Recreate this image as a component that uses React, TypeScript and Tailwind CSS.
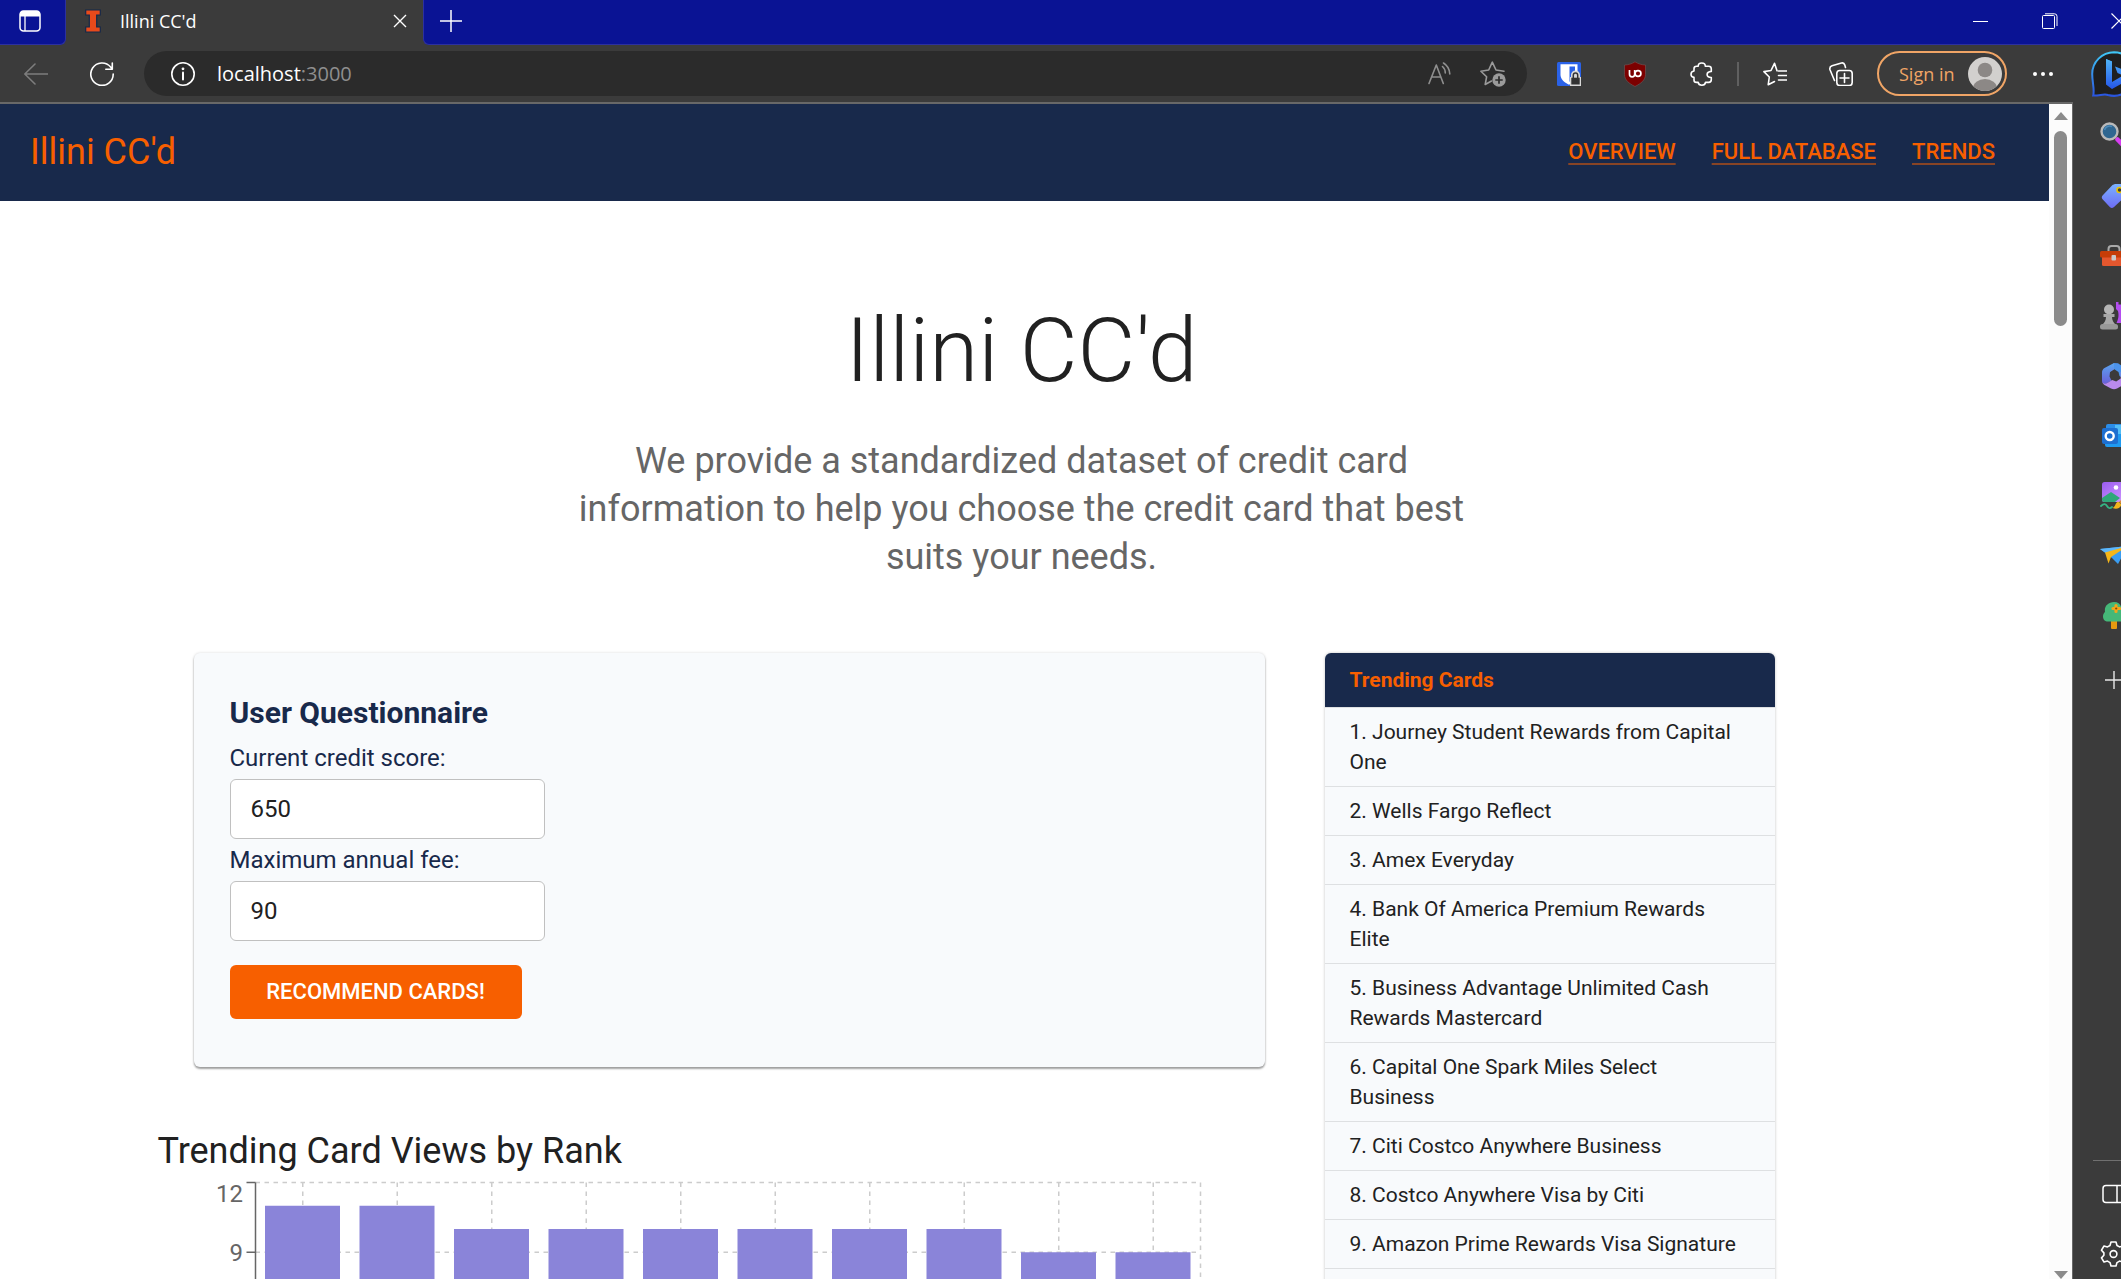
import React from "react";

const views = [11, 11, 10, 10, 10, 10, 10, 10, 9, 9];

const trending = [
  "Journey Student Rewards from Capital One",
  "Wells Fargo Reflect",
  "Amex Everyday",
  "Bank Of America Premium Rewards Elite",
  "Business Advantage Unlimited Cash Rewards Mastercard",
  "Capital One Spark Miles Select Business",
  "Citi Costco Anywhere Business",
  "Costco Anywhere Visa by Citi",
  "Amazon Prime Rewards Visa Signature",
];

type LineIconProps = { children: React.ReactNode; className?: string };

function LineIcon({ children, className = "size-6 shrink-0" }: LineIconProps) {
  return (
    <svg
      viewBox="0 0 24 24"
      fill="none"
      stroke="currentColor"
      strokeWidth="1.6"
      strokeLinecap="round"
      strokeLinejoin="round"
      className={className}
      aria-hidden="true"
    >
      {children}
    </svg>
  );
}

function TabStrip() {
  return (
    <div className="flex h-[45px] shrink-0 bg-[#3b3b3b] text-white">
      <div className="flex w-[66px] shrink-0 items-center rounded-br-md border-r border-b border-[#2c30a0] bg-[#0a1394] pb-0.5 pl-[19px]">
        <button type="button" aria-label="Tab actions">
          <svg viewBox="0 0 22 22" className="size-[22px]" fill="none" aria-hidden="true">
            <rect x="1" y="1" width="20" height="20" rx="3.5" stroke="#fff" strokeWidth="1.5" />
            <path d="M1 6.5V4.5A3.5 3.5 0 0 1 4.5 1h13A3.5 3.5 0 0 1 21 4.5v2z" fill="#fff" />
            <path d="M6 6v15" stroke="#fff" strokeWidth="1.3" />
          </svg>
        </button>
      </div>
      <div className="flex w-[357px] shrink-0 items-center pr-4 pb-[3px] pl-[19px]">
        <svg viewBox="0 0 16 24" className="h-6 w-4" aria-hidden="true">
          <path
            d="M.7 1h14.6v5h-3.6v12h3.6v5H.7v-5h3.6V6H.7z"
            fill="#e84a1b"
            stroke="#13294b"
            strokeWidth="1.2"
          />
        </svg>
        <span className="ml-[19px] flex-1 text-lg leading-6">Illini CC'd</span>
        <button type="button" aria-label="Close tab">
          <svg viewBox="0 0 14 14" className="size-[14px]" stroke="#fff" strokeWidth="1.4" aria-hidden="true">
            <path d="M1 1l12 12M13 1L1 13" />
          </svg>
        </button>
      </div>
      <div className="flex min-w-0 flex-1 items-center overflow-hidden rounded-bl-md border-b border-l border-[#2c30a0] bg-[#0a1394] pb-[3px] pl-4">
        <button type="button" aria-label="New tab">
          <svg viewBox="0 0 22 22" className="size-[22px]" stroke="#fff" strokeWidth="1.5" aria-hidden="true">
            <path d="M0 11h22M11 0v22" />
          </svg>
        </button>
        <div className="-mr-1.5 ml-auto flex items-center gap-[53px]">
          <button type="button" aria-label="Minimize">
            <svg viewBox="0 0 16 16" className="size-4" stroke="#fff" strokeWidth="1" aria-hidden="true">
              <path d="M0 8.5h15" />
            </svg>
          </button>
          <button type="button" aria-label="Restore">
            <svg viewBox="0 0 16 16" className="size-4" stroke="#fff" fill="none" strokeWidth="1" aria-hidden="true">
              <rect x=".5" y="2.5" width="12" height="13" rx="1" />
              <path d="M3 .8h9.500a2.500 2.500 0 0 1 2.500 2.500V13" />
            </svg>
          </button>
          <button type="button" aria-label="Close">
            <svg viewBox="0 0 16 16" className="size-4" stroke="#fff" strokeWidth="1.2" aria-hidden="true">
              <path d="M.5 .5l15 15M15.500 .5l-15 15" />
            </svg>
          </button>
        </div>
      </div>
    </div>
  );
}

function Toolbar() {
  return (
    <div className="flex h-[57px] shrink-0 items-center overflow-hidden bg-[#3b3b3b] pl-6 text-white">
      <button type="button" aria-label="Back" className="text-[#7d7d7d]">
        <LineIcon>
          <path d="M23.5 12H.8M11 2L.8 12 11 22" />
        </LineIcon>
      </button>
      <button type="button" aria-label="Refresh" className="ml-[42px]">
        <LineIcon>
          <path d="M23.2 12A11.2 11.2 0 1 1 20.6 5l1.6 2M22.3 1v6.2h-6.5" />
        </LineIcon>
      </button>
      <div className="ml-[30px] flex h-[45px] min-w-0 flex-1 items-center rounded-full bg-[#2b2b2b] pr-[21px] pl-[27px]">
        <LineIcon>
          <circle cx="12" cy="12" r="11.2" />
          <path d="M12 10.5v7" strokeWidth="2" />
          <circle cx="12" cy="6.8" r=".6" fill="currentColor" />
        </LineIcon>
        <span className="ml-[22px] flex-1 text-xl leading-6">
          localhost<span className="text-[#8f8f8f]">:3000</span>
        </span>
        <button type="button" aria-label="Read aloud" className="text-[#8f8f8f]">
          <LineIcon>
            <path d="M1 21.5L8.3 3l7 18.5M3.6 15h9.3M14.5 4.5c1.8 1.6 2.8 3.9 2.8 6.5M15.5 1c3.6 2.3 6.1 6.3 6.3 11" />
          </LineIcon>
        </button>
        <button type="button" aria-label="Add to favorites" className="ml-7 text-[#9a9a9a]">
          <svg viewBox="0 0 26 26" className="size-[26px]" fill="none" aria-hidden="true">
            <path
              d="M24 10.2l-8-1.2L12.3 1.2 8.7 9 .9 10.2 6.6 15.8 5.2 23.5 11.5 20"
              stroke="currentColor"
              strokeWidth="1.6"
              strokeLinejoin="round"
              strokeLinecap="round"
            />
            <circle cx="19" cy="19" r="6.7" fill="currentColor" />
            <path d="M19 15.3v7.4M15.3 19h7.4" stroke="#2b2b2b" strokeWidth="1.7" />
          </svg>
        </button>
      </div>
      <button type="button" aria-label="Password manager" className="ml-[30px]">
        <svg viewBox="0 0 24 24" className="size-6" aria-hidden="true">
          <rect width="24" height="24" rx="1.5" fill="#2a62e8" />
          <path d="M3.5 2.3h17v10.5c0 4.500-3.500 7.600-8.500 10-5-2.400-8.500-5.500-8.500-10z" fill="#fff" />
          <path d="M12.5 4.5H18v8.300c0 3-2 5-5.500 7z" fill="#2a62e8" />
          <path d="M14 15v-2a4.500 4.500 0 0 1 9 0v2h1v9H13v-9z" fill="#d8d8d8" />
          <path d="M16.300 16v-2.800a2.200 2.200 0 0 1 4.400 0V16" fill="none" stroke="#333" strokeWidth="1.5" />
          <rect x="14.300" y="15.700" width="8.400" height="6.800" fill="#333" />
        </svg>
      </button>
      <button type="button" aria-label="Ad blocker" className="ml-[42px]">
        <svg viewBox="0 0 24 26" className="h-[26px] w-6" fill="none" aria-hidden="true">
          <path
            d="M12 .8c3.300 2.100 6.600 3 10.500 3.200v9.500c0 5.500-4.500 9-10.500 12-6-3-10.500-6.500-10.500-12V4C5.400 3.800 8.700 2.900 12 .8z"
            fill="#7c0000"
            stroke="#6b5252"
            strokeWidth=".7"
          />
          <path d="M6.500 9v4.200a2.600 2.600 0 0 0 5.200 0V9" stroke="#fff" strokeWidth="1.7" />
          <circle cx="15" cy="12.500" r="2.900" stroke="#fff" strokeWidth="1.7" />
        </svg>
      </button>
      <button type="button" aria-label="Extensions" className="ml-[43px]">
        <LineIcon>
          <path d="M8.200 4.200C8.200 2.300 9.800 1 11.800 1s3.500 1.300 3.500 3.200h3.400c1.600 0 2.600 1 2.600 2.600v2.600c-3.200.3-4.200 1.400-4.200 3.100 0 1.700 1 2.800 4.200 3v2.300c0 1.600-1 2.600-2.600 2.600h-3.200c-.2 1.700-1.700 2.800-3.600 2.800s-3.500-1.100-3.700-2.800H6.400c-1.500 0-2.400-1-2.400-2.500v-2.500C2.200 15.200 1 14 1 12.200s1.200-3 3-3.200V6.700c0-1.600 1-2.500 2.500-2.500z" />
        </LineIcon>
      </button>
      <div className="ml-[23px] h-6 w-0.5 shrink-0 bg-[#606060]" />
      <button type="button" aria-label="Favorites" className="ml-6">
        <LineIcon>
          <path d="M14 8.800L11.500 1.300 8 8.500.9 9.600 6.300 15 5.200 22.800 11.500 19.500M15.500 9h8M15.500 13.500h8M15.500 18h8" />
        </LineIcon>
      </button>
      <button type="button" aria-label="Collections" className="ml-[42px]">
        <LineIcon>
          <rect x="7.800" y="8.500" width="15.400" height="15" rx="3" />
          <path d="M15.500 11.500v9M11 16h9M5.500 18.500L1 7.700C.5 5.800 1.300 4.400 3 3.800L12.500 1c1.600-.4 2.800.3 3.300 2l.7 2.500" />
        </LineIcon>
      </button>
      <button
        type="button"
        className="ml-6 flex h-[45px] w-[130px] shrink-0 items-center justify-between rounded-full border-2 border-[#f0a566] pr-[3px] pl-5 text-lg leading-6 text-[#f0a566]"
      >
        Sign in
        <svg viewBox="0 0 34 34" className="size-[34px]" aria-hidden="true">
          <clipPath id="avatar">
            <circle cx="17" cy="17" r="17" />
          </clipPath>
          <g clipPath="url(#avatar)">
            <rect width="34" height="34" fill="#d2d0ce" />
            <circle cx="17" cy="13" r="7.3" fill="#8c8886" />
            <ellipse cx="17" cy="31.500" rx="12" ry="9.500" fill="#8c8886" />
          </g>
        </svg>
      </button>
      <button type="button" aria-label="Settings and more" className="ml-6">
        <svg viewBox="0 0 24 24" className="size-6" fill="#fff" aria-hidden="true">
          <circle cx="4" cy="12" r="2" />
          <circle cx="12" cy="12" r="2" />
          <circle cx="20" cy="12" r="2" />
        </svg>
      </button>
      <button type="button" aria-label="Bing chat" className="ml-9 w-[30px] shrink-0 overflow-hidden">
        <svg viewBox="0 0 46 46" className="size-[46px]" aria-hidden="true">
          <defs>
            <linearGradient id="bingRing" x1="0" y1="0" x2="0" y2="1">
              <stop offset="0" stopColor="#3fc6f5" />
              <stop offset="1" stopColor="#2a55e0" />
            </linearGradient>
            <linearGradient id="bingB" x1="0" y1="0" x2="0" y2="1">
              <stop offset="0" stopColor="#4fb4f5" />
              <stop offset="1" stopColor="#2556ea" />
            </linearGradient>
          </defs>
          <path
            d="M23 1.200A21.800 21.800 0 1 1 17 44c-4-1.500-8 .8-14.800.6C3.800 38 1.200 32 1.200 23A21.800 21.800 0 0 1 23 1.200z"
            fill="#1f1f1f"
            stroke="url(#bingRing)"
            strokeWidth="2"
          />
          <path d="M15 8l6 2.500v18.500L15 33z" fill="#3f9ff5" />
          <path d="M15 8l6 2.500v20.500l11-6.500-5.500-2.500-2.500-6.500 13 5v8.500L21 38l-6-4.500z" fill="url(#bingB)" />
        </svg>
      </button>
    </div>
  );
}

function SideCell({ label, children }: { label: string; children: React.ReactNode }) {
  return (
    <button type="button" aria-label={label} className="flex h-[60px] w-full shrink-0 items-center overflow-hidden pl-[27px]">
      {children}
    </button>
  );
}

const colorIcon = "size-7 shrink-0";

function Sidebar() {
  return (
    <aside className="flex w-12 shrink-0 flex-col overflow-hidden bg-[#3b3b3b] pt-1 text-white">
      <svg className="absolute size-0" aria-hidden="true">
        <defs>
          <linearGradient id="tagFill" x1="0" y1="0" x2="0" y2="1">
            <stop offset="0" stopColor="#7ab2ff" />
            <stop offset="1" stopColor="#6d6cf5" />
          </linearGradient>
          <linearGradient id="officeBlue" x1="0" y1="0" x2="0" y2="1">
            <stop offset="0" stopColor="#5aa6f0" />
            <stop offset="1" stopColor="#6a5fd9" />
          </linearGradient>
          <linearGradient id="photoFill" x1="0" y1="0" x2="1" y2="1">
            <stop offset="0" stopColor="#9a5cf0" />
            <stop offset="1" stopColor="#d39bff" />
          </linearGradient>
        </defs>
      </svg>
      <SideCell label="Search">
        <svg viewBox="0 0 28 28" className={colorIcon} aria-hidden="true">
          <path d="M17.500 17.500l7 7" stroke="#d63df0" strokeWidth="4.500" strokeLinecap="round" />
          <circle cx="9.500" cy="9.500" r="8" fill="#2f6690" stroke="#b9b9b9" strokeWidth="2.400" />
          <path d="M4.500 8A5.500 5.500 0 0 1 12 4.500" stroke="#4d8ab8" strokeWidth="1.500" fill="none" />
        </svg>
      </SideCell>
      <SideCell label="Shopping">
        <svg viewBox="0 0 28 28" className={colorIcon} aria-hidden="true">
          <path d="M15 2h10a2 2 0 0 1 2 2v9L14 25a3 3 0 0 1-4.200 0L2.800 17.500a3 3 0 0 1 0-4.200L12.500 3z" fill="url(#tagFill)" />
          <circle cx="19.500" cy="8" r="2.500" fill="#3b3b3b" stroke="#e8c400" strokeWidth="1.600" />
        </svg>
      </SideCell>
      <SideCell label="Tools">
        <svg viewBox="0 0 28 28" className={colorIcon} aria-hidden="true">
          <path d="M8.500 9V7a3 3 0 0 1 3-3h5a3 3 0 0 1 3 3v2" fill="none" stroke="#aaa" strokeWidth="2" />
          <path d="M2 14h24v8.500a1.500 1.500 0 0 1-1.500 1.500h-21A1.500 1.500 0 0 1 2 22.500z" fill="#e4572e" />
          <rect x="0" y="9" width="28" height="6.500" rx="1.500" fill="#c63d08" />
          <rect x="11.500" y="13" width="4.500" height="5.500" rx="1" fill="#c9c9c9" />
        </svg>
      </SideCell>
      <SideCell label="Games">
        <svg viewBox="0 0 28 28" className={colorIcon} aria-hidden="true">
          <path d="M16 0h2.500v2.500H21V0h3v2.500h2V0h2v9h-2v12H16.500c2-4 2.500-8 1.500-12l-2-2z" fill="#b44df0" />
          <circle cx="9" cy="7.500" r="5" fill="#b5b5b5" />
          <path d="M3.500 12h11v3h-2.500c0 3.500 1.500 5.500 3.500 7.500H2.500C4.500 20.500 6 18.500 6 15H3.500z" fill="#a8a8a8" />
          <rect x="0" y="22" width="18" height="5.500" rx="2.500" fill="#999" />
        </svg>
      </SideCell>
      <SideCell label="Microsoft 365">
        <svg viewBox="0 0 28 28" className={colorIcon} aria-hidden="true">
          <path d="M14 1l4 .3 8 5.200c1 1 1.500 2 1.500 3.500v9l-8-5-1-4-4.500-3-4.500 3z" fill="#4c93ea" />
          <path d="M14 1L4.500 6C3 7 2 8.500 2 10.500v8.500c0 2.500 2.500 3.500 4.500 2.500l5-3-2-4 .5-4.500 4-2.500z" fill="url(#officeBlue)" />
          <path d="M2.200 19.500c.8 2.500 3 2.800 5 1.500l5-3 4 1.500 4.500-3V10l5 3.500c1.300 1 1.800 2 1.800 3.500 0 2-.5 3.500-2 4.500L17 26.500c-2 1-4 1-6 0L4.500 23c-1.300-.8-2-2-2.300-3.500z" fill="#b98aec" />
        </svg>
      </SideCell>
      <SideCell label="Outlook">
        <svg viewBox="0 0 28 28" className={colorIcon} aria-hidden="true">
          <rect x="6" y="2" width="22" height="14" rx="2" fill="#2b8de8" />
          <rect x="15" y="3" width="13" height="10" fill="#53bdf5" />
          <path d="M5 12h23v13H7a2 2 0 0 1-2-2z" fill="#1f9af0" />
          <rect x="2" y="6" width="16" height="16" rx="2" fill="#1e6fd0" />
          <circle cx="9.700" cy="14" r="4" fill="none" stroke="#fff" strokeWidth="2.400" />
        </svg>
      </SideCell>
      <SideCell label="Image creator">
        <svg viewBox="0 0 28 28" className={colorIcon} aria-hidden="true">
          <rect x="2" y="0" width="26" height="20" rx="2.500" fill="url(#photoFill)" />
          <path d="M2 16l9-6 9 6-5 4H4.500A2.500 2.500 0 0 1 2 17.500z" fill="#2fa878" />
          <circle cx="16" cy="5.500" r="2.300" fill="#fff" />
          <path d="M1 24c3-3 5-2 6 0s3 3 5 1" stroke="#35b383" strokeWidth="1.800" fill="none" strokeLinecap="round" />
          <path d="M28 11l-9 9 2 2 7-6z" fill="#d98b3a" />
          <path d="M18 19.500l3.500 3c-1 4-5 5-9 3.500 3-1 2.500-5 5.500-6.500z" fill="#f2b41c" />
        </svg>
      </SideCell>
      <SideCell label="Drop">
        <svg viewBox="0 0 28 28" className={colorIcon} aria-hidden="true">
          <path d="M0 7l28-3-10 18-6-6z" fill="#3a9df2" />
          <path d="M0 7l28-3L9 13z" fill="#5db7fa" />
          <path d="M5 10.500L28 4 11 15l-2.500 6.500z" fill="#f5b619" />
        </svg>
      </SideCell>
      <SideCell label="Tree">
        <svg viewBox="0 0 28 28" className={colorIcon} aria-hidden="true">
          <rect x="11" y="18" width="6" height="9" rx="1" fill="#e69a10" />
          <path d="M14 0c5 0 7 3 7.500 6.500 3 2 4.500 5 4 8-.5 3-2.500 5-5.500 5H8c-3 0-5-2-5-5 0-2 .8-3.500 2-4.500C4 4.500 8 0 14 0z" fill="#45b878" />
          <path d="M16 3.500v6M13 6.500h6.500" stroke="#f2a61a" strokeWidth="3.200" strokeLinecap="round" />
          <circle cx="16.200" cy="6.500" r="1.100" fill="#8a4a00" />
        </svg>
      </SideCell>
      <div className="pt-1">
        <SideCell label="Customize">
          <svg viewBox="0 0 28 28" className={colorIcon} stroke="#e8e8e8" strokeWidth="1.400" aria-hidden="true">
            <path d="M5 14h18M14 5v18" />
          </svg>
        </SideCell>
      </div>
      <div className="mt-auto mb-[-5px] ml-5 h-px shrink-0 bg-[#707070]" />
      <div className="mt-2 mb-[-5px] flex flex-col">
        <SideCell label="Hide sidebar">
          <svg viewBox="0 0 28 28" className={colorIcon} fill="none" stroke="#fff" strokeWidth="1.500" aria-hidden="true">
            <rect x="3" y="5.500" width="24" height="17" rx="3" />
            <path d="M17 5.500v17" />
          </svg>
        </SideCell>
        <SideCell label="Settings">
          <svg viewBox="0 0 28 28" className={colorIcon} fill="none" stroke="#fff" strokeWidth="1.600" strokeLinejoin="round" aria-hidden="true">
            <circle cx="13.500" cy="14" r="3.400" />
            <path d="M11 2h5l1 3.500 2.500 1.400 3.500-.9 2.500 4.200-2.400 2.700v2.400l2.400 2.600L23 22l-3.500-.9-2.500 1.500L16 26h-5l-1-3.400-2.500-1.500L4 22l-2.500-4.100 2.400-2.600v-2.400L1.500 10.200 4 6l3.500.9L10 5.500z" />
          </svg>
        </SideCell>
      </div>
    </aside>
  );
}

function Scrollbar() {
  return (
    <div className="flex w-[23px] shrink-0 flex-col items-center bg-[#fcfcfc] pt-2" aria-hidden="true">
      <svg viewBox="0 0 14 8" className="h-2 w-[14px] shrink-0" fill="#8b8b8b">
        <path d="M7 0l7 8H0z" />
      </svg>
      <div className="mt-[11px] h-[195px] w-[13px] shrink-0 rounded-full bg-[#8b8b8b]" />
      <svg viewBox="0 0 14 8" className="mt-auto h-2 w-[14px] shrink-0" fill="#8b8b8b">
        <path d="M0 0h14L7 8z" />
      </svg>
    </div>
  );
}

function NavBar() {
  return (
    <nav className="flex h-[97px] items-center justify-between bg-[#18294b] pr-[54px] pb-0.5 pl-[30px] text-[#f75f00]">
      <span className="text-4xl">Illini CC'd</span>
      <div className="flex gap-9 text-[22px] leading-9 font-medium uppercase">
        <a href="#overview" className="underline decoration-[#f75f00]/50 decoration-2 underline-offset-4">Overview</a>
        <a href="#database" className="underline decoration-[#f75f00]/50 decoration-2 underline-offset-4">Full Database</a>
        <a href="#trends" className="underline decoration-[#f75f00]/50 decoration-2 underline-offset-4">Trends</a>
      </div>
    </nav>
  );
}

function Questionnaire() {
  const field =
    "h-[60px] w-[315px] rounded-md border border-[#c0c0c0] bg-white px-5 text-2xl text-[#212121] outline-none";
  return (
    <form className="mx-9 flex flex-col items-start gap-[3px] rounded-md bg-[#f8fafc] px-9 pt-9 pb-12 shadow-[0_2px_2px_rgba(0,0,0,0.35),0_0_3px_rgba(0,0,0,0.15)]">
      <h2 className="text-3xl leading-[48px] font-bold text-[#18294b]">User Questionnaire</h2>
      <label htmlFor="score" className="text-2xl leading-9 text-[#18294b]">Current credit score:</label>
      <input id="score" type="text" defaultValue="650" className={field} />
      <label htmlFor="fee" className="text-2xl leading-9 text-[#18294b]">Maximum annual fee:</label>
      <input id="fee" type="text" defaultValue="90" className={field} />
      <button
        type="button"
        className="mt-[21px] h-[54px] w-[292px] rounded-md bg-[#f75f00] text-[22px] leading-9 font-medium text-white uppercase"
      >
        Recommend Cards!
      </button>
    </form>
  );
}

function ViewsChart() {
  const left = 97.5;
  const top = 7.5;
  const step = 94.5;
  const unit = 23.25;
  const right = left + step * views.length;
  const yFor = (value: number) => top + (12 - value) * unit;
  return (
    <svg width="1086" height="330" className="block max-w-full" role="img" aria-label="Trending card views by rank">
      <g stroke="#ccc" strokeWidth="1.5" strokeDasharray="4.5 4.5">
        {[12, 9, 6].map((v) => (
          <line key={v} x1={left} x2={right} y1={yFor(v)} y2={yFor(v)} />
        ))}
        {views.map((_, i) => (
          <line key={i} x1={left + step * (i + 0.5)} x2={left + step * (i + 0.5)} y1={top} y2={yFor(0)} />
        ))}
        <line x1={right} x2={right} y1={top} y2={yFor(0)} />
      </g>
      {views.map((v, i) => (
        <rect key={i} x={left + step * i + 9.5} y={yFor(v)} width="75" height={v * unit} fill="#8a84d9" />
      ))}
      <path
        d={`M${left} ${top}V${yFor(0)}M${left - 9} ${top}h9M${left - 9} ${yFor(9)}h9`}
        stroke="#666"
        strokeWidth="1.5"
        fill="none"
      />
      <g fill="#666" fontSize="24" textAnchor="end">
        <text x="85" y="27">12</text>
        <text x="85" y="86">9</text>
      </g>
    </svg>
  );
}

function TrendingTable() {
  return (
    <div className="w-[450px] shrink-0 self-start overflow-hidden rounded-t-md bg-[#f8fafc] shadow-[0_0_3px_rgba(0,0,0,0.25)]">
      <table className="w-full border-collapse text-left text-[21px] text-[#212121]">
        <thead>
          <tr className="bg-[#18294b]">
            <th className="px-[25px] py-[9px] leading-9 font-bold text-[#f75f00]">Trending Cards</th>
          </tr>
        </thead>
        <tbody>
          {trending.map((name, i) => (
            <tr key={name}>
              <td className="border-y border-[#dee0e2] py-[9px] pr-9 pl-[25px] leading-[30px]">
                {`${i + 1}. ${name}`}
              </td>
            </tr>
          ))}
          <tr>
            <td className="h-12" />
          </tr>
        </tbody>
      </table>
    </div>
  );
}

function Page() {
  return (
    <div className="min-w-0 flex-1 overflow-hidden bg-white font-[Roboto,sans-serif]">
      <NavBar />
      <main className="pr-1.5">
        <header className="mx-auto max-w-[900px] pt-24 text-center">
          <h1 className="mb-8 text-[89px] leading-[108px] font-light text-[#212121]">Illini CC'd</h1>
          <p className="text-4xl leading-[48px] text-[#666]">
            We provide a standardized dataset of credit card information to help you choose the credit card that best
            suits your needs.
          </p>
        </header>
        <div className="mx-auto mt-[72px] flex max-w-[1800px] gap-6 pr-[147px] pl-9">
          <section className="min-w-0 flex-1">
            <Questionnaire />
            <h2 className="mt-[60px] text-4xl leading-[48px] text-[#212121]">Trending Card Views by Rank</h2>
            <ViewsChart />
          </section>
          <TrendingTable />
        </div>
      </main>
    </div>
  );
}

export default function App() {
  return (
    <div className="flex h-screen flex-col overflow-hidden bg-[#3b3b3b] font-['Open_Sans','Noto_Sans',sans-serif]">
      <TabStrip />
      <Toolbar />
      <div className="flex min-h-0 flex-1">
        <div className="flex min-w-0 flex-1 border-t-2 border-r border-[#686868]">
          <Page />
          <Scrollbar />
        </div>
        <Sidebar />
      </div>
    </div>
  );
}
